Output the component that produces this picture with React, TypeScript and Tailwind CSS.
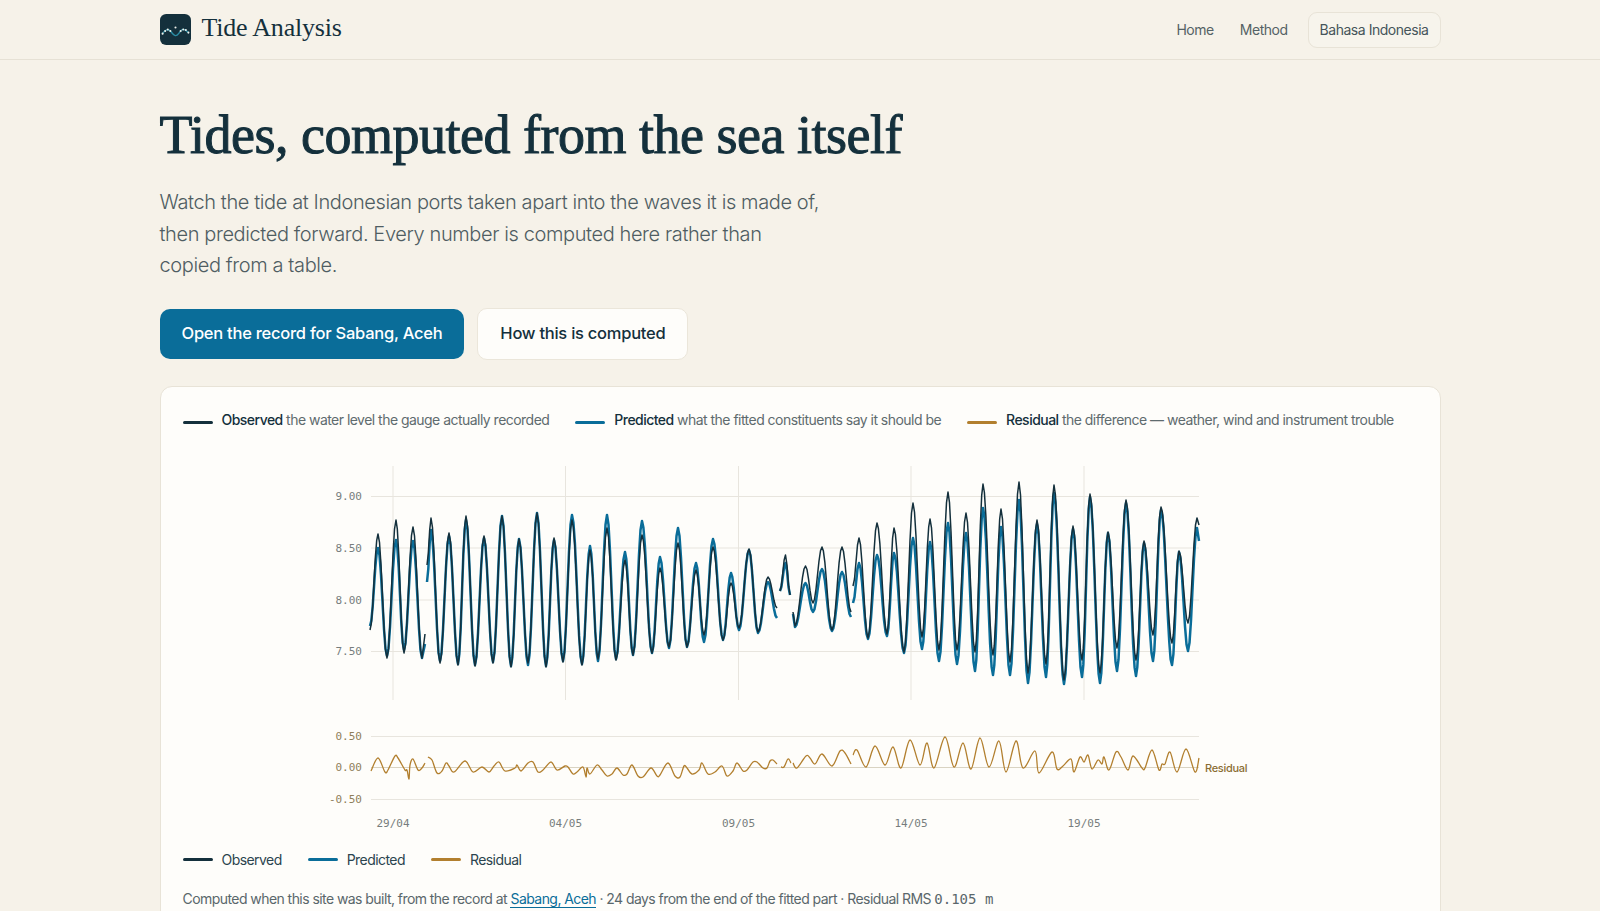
const INK = "#14303c";
const SEA = "#0a6d99";
const OCHRE = "#b27f2e";

// [x, observed y, predicted y] at each turning point, in page pixels. A new array is a gap in the record.
const tide: number[][][] = [
  [[370,630,626],[378,534,548],[387,658,656],[396,520,540],[404,653,650],[413,527,541],[422,658,658],[425,634,644]],
  [[427,565,582],[431,518,530],[440,663,661],[449,533,536],[458,665,664],[466,516,520],[475,666,665],[484,536,538],[493,663,662],[502,516,516],[511,667,666],[519,539,539],[528,663,665],[537,513,513],[546,667,666],[554,538,540],[563,662,661],[572,520,515],[582,665,664],[590,550,546],[598,659,661],[607,528,515],[616,660,659],[625,560,552],[633,655,655],[642,535,521],[652,653,653],[660,568,557],[669,647,648],[678,543,528],[687,647,647],[696,570,563],[704,635,642],[713,547,539],[723,640,640],[731,583,573],[739,628,630],[749,549,550],[758,632,633],[768,577,582],[777,608,618]],
  [[780,591,591],[785.5,555,563],[790,595,595]],
  [[793,612,614],[795,626,627],[805.5,566,583],[813,603,612],[822,547,569],[832,630,631],[842,547,572],[851,612,617]],
  [[853,586,603],[859,538,563],[868,638,639],[877,523,555],[887,634,636],[894,528,553],[904,652,653],[913,503,538],[922,637,649],[930,519,542],[939,650,661],[948,492,523],[957,650,664],[966,513,533],[975,652,671],[983,484,508],[993,655,675],[1001,509,527],[1010,662,675],[1019,482,500],[1028,673,683],[1037,520,524],[1046,664,677],[1054,485,493],[1064,680,684],[1073,526,529],[1082,660,677],[1090,494,497],[1100,673,683],[1108,532,533],[1117,648,671],[1126,500,503],[1136,660,676],[1144,541,543],[1153,635,661],[1161,507,510],[1172,643,665],[1179,551,552],[1188,623,651],[1197,518,528],[1199,525,541]],
];

// residual trace, read off as x / y pairs
const residual: number[][][] = [
  [[371,771],[378,758],[385,772],[388,770],[395,756],[398,758],[405,770],[407,770],[409,779],[410,765],[413,759],[418,770],[422,768],[425,763]],
  [[428,757],[432,760],[437,773],[442,771],[446,763],[449,766],[454,772],[465,761],[473,772],[482,767],[489,772],[494,766],[499,762],[505,771],[515,768],[517,765],[521,771],[528,763],[533,762],[538,772],[543,770],[551,762],[557,770],[565,766],[568,767],[573,774],[577,772],[583,767],[586,777],[587,768],[590,774],[597,765],[602,770],[607,776],[612,774],[617,768],[623,775],[627,774],[632,765],[638,776],[643,777],[651,768],[657,776],[660,775],[668,763],[675,776],[680,777],[684,766],[687,768],[692,774],[699,770],[702,763],[708,774],[715,772],[722,766],[727,776],[733,771],[737,763],[743,771],[747,770],[753,762],[757,762],[763,768],[767,768],[770,761],[773,760],[777,764]],
  [[781,767],[784,767],[788,759],[791,763]],
  [[793,763],[797,768],[806,756],[810,758],[815,764],[822,754],[832,766],[840,751],[845,753],[851,764]],
  [[853,755],[857,750],[866,767],[875,746],[885,765],[893,747],[901,768],[910,740],[920,765],[927,743],[934,768],[945,737],[954,767],[963,743],[971,769],[980,738],[989,767],[999,741],[1006,772],[1016,741],[1023,768],[1035,751],[1039,773],[1052,752],[1057,769],[1063,766],[1071,759],[1074,772],[1080,757],[1084,762],[1088,755],[1092,769],[1098,760],[1102,764],[1104,757],[1109,770],[1116,752],[1121,757],[1128,770],[1133,756],[1142,768],[1145,768],[1152,750],[1159,770],[1162,764],[1165,764],[1170,752],[1177,772],[1186,749],[1195,772],[1199,758]],
];

// cosine ease between turning points, about one sample per 1.44px like the hourly record
function tidePath(seg: number[][], col: number) {
  let d = `M${seg[0][0]} ${seg[0][col]}`;
  for (let i = 1; i < seg.length; i++) {
    const a = seg[i - 1];
    const b = seg[i];
    const n = Math.max(2, Math.round((b[0] - a[0]) / 1.44));
    for (let k = 1; k <= n; k++) {
      const t = k / n;
      const e = (1 - Math.cos(Math.PI * t)) / 2;
      d += `L${(a[0] + (b[0] - a[0]) * t).toFixed(1)} ${(a[col] + (b[col] - a[col]) * e).toFixed(1)}`;
    }
  }
  return d;
}

function smooth(seg: number[][]) {
  let d = `M${seg[0][0]} ${seg[0][1]}`;
  for (let i = 0; i < seg.length - 1; i++) {
    const p0 = seg[Math.max(0, i - 1)];
    const p1 = seg[i];
    const p2 = seg[i + 1];
    const p3 = seg[Math.min(seg.length - 1, i + 2)];
    d += `C${(p1[0] + (p2[0] - p0[0]) / 6).toFixed(1)} ${(p1[1] + (p2[1] - p0[1]) / 6).toFixed(1)} ${(p2[0] - (p3[0] - p1[0]) / 6).toFixed(1)} ${(p2[1] - (p3[1] - p1[1]) / 6).toFixed(1)} ${p2[0]} ${p2[1]}`;
  }
  return d;
}

const mono = '"DejaVu Sans Mono", "Liberation Mono", monospace';

function Chart() {
  const xs = [393, 565.5, 738.5, 911, 1084];
  const dates = ["29/04", "04/05", "09/05", "14/05", "19/05"];
  const ticks: [number, string][] = [[496.5, "9.00"], [548, "8.50"], [600, "8.00"], [651.5, "7.50"]];
  const resTicks: [number, string][] = [[736.5, "0.50"], [767.5, "0.00"], [799.5, "-0.50"]];
  return (
    <svg viewBox="183 450 1235 390" className="block w-[1235px] h-[390px]">
      {xs.map((x) => (
        <line key={x} x1={x} x2={x} y1={466} y2={700} stroke="#e8e5de" />
      ))}
      {ticks.map(([y, label]) => (
        <g key={label}>
          <line x1={371} x2={1199} y1={y} y2={y} stroke="#e8e5de" />
          <text x={362} y={y + 3.5} textAnchor="end" fontSize={11} fontFamily={mono} fill="#777d7d">{label}</text>
        </g>
      ))}
      {tide.map((seg, i) => (
        <path key={i} d={tidePath(seg, 2)} fill="none" stroke={SEA} strokeWidth={2.5} strokeLinejoin="round" />
      ))}
      {tide.map((seg, i) => (
        <path key={i} d={tidePath(seg, 1)} fill="none" stroke={INK} strokeWidth={1.5} strokeLinejoin="round" />
      ))}

      {resTicks.map(([y, label], i) => (
        <g key={label}>
          <line x1={371} x2={1199} y1={y} y2={y} stroke={i === 1 ? "#d9d3c2" : "#e8e5de"} />
          <text x={362} y={y + 3.5} textAnchor="end" fontSize={11} fontFamily={mono} fill="#8f7f5a">{label}</text>
        </g>
      ))}
      {residual.map((seg, i) => (
        <path key={i} d={smooth(seg)} fill="none" stroke={OCHRE} strokeWidth={1.3} strokeLinejoin="round" />
      ))}
      <text x={1205} y={771.5} fontSize={11} fontWeight={500} letterSpacing={-0.3} fontFamily="Inter, sans-serif" fill="#8a6d32">Residual</text>

      {xs.map((x, i) => (
        <text key={x} x={x} y={827} textAnchor="middle" fontSize={11} fontFamily={mono} fill="#777d7d">{dates[i]}</text>
      ))}
    </svg>
  );
}

const Swatch = ({ color, low }: { color: string; low?: boolean }) => (
  <span className={low ? "inline-block w-[30px] h-[3px] rounded-full mt-[5px]" : "inline-block w-[30px] h-[3px] rounded-full"} style={{ background: color }} />
);

export default function App() {
  return (
    <div className="h-[911px] overflow-hidden bg-[#f6f2e9] text-[#14303c] font-['Inter',sans-serif]">
      {/* Header */}
      <header className="h-[60px] border-b border-[#e6e1d5]">
        <div className="w-[1281px] mx-auto h-full flex items-center justify-between">
          <div className="flex items-center gap-[11px]">
            <svg viewBox="0 0 30 30" className="w-[31px] h-[31px]">
              <rect width="30" height="30" rx="6" fill={INK} />
              <path d="M2.5 19C5 15 8 14 10.5 17S15 23 18 19S22 14 24.5 15.5S27 18 27.5 18" fill="none" stroke="#2a8ba3" strokeWidth="1.4" strokeLinecap="round" />
              <g fill="#eef0ea">
                <circle cx="2.5" cy="19" r="1" />
                <circle cx="5" cy="16.5" r="1" />
                <circle cx="7.5" cy="15" r="1" />
                <circle cx="10" cy="16.5" r="1" />
                <circle cx="15" cy="13" r="1" />
                <circle cx="20" cy="16.5" r="1" />
                <circle cx="22.5" cy="15" r="1" />
                <circle cx="25" cy="15.5" r="1" />
                <circle cx="27.5" cy="18" r="1" />
              </g>
            </svg>
            <span className="font-['Liberation_Serif',serif] text-[26px] leading-none -mt-[4px] tracking-[-0.2px]">Tide Analysis</span>
          </div>
          <nav className="flex items-center text-[14px] tracking-[-0.47px] text-[#556265]">
            <a className="mr-[26px]">Home</a>
            <a className="mr-[20px]">Method</a>
            <a className="h-[36px] px-[11px] flex items-center rounded-[9px] border border-[#e8e3d7] bg-[#f7f4ec] text-[#46555a]">Bahasa Indonesia</a>
          </nav>
        </div>
      </header>

      <main className="w-[1281px] mx-auto">
        {/* Hero */}
        <h1 className="mt-[42px] font-['Liberation_Serif',serif] font-normal text-[54px] leading-[66px] tracking-[-0.5px] [-webkit-text-stroke:1px_#14303c]">
          Tides, computed from the sea itself
        </h1>
        <p className="mt-[19px] w-[700px] text-[20px] leading-[31.5px] tracking-[-0.39px] font-[350] text-[#4f5d62]">
          Watch the tide at Indonesian ports taken apart into the waves it is made of,<br />
          then predicted forward. Every number is computed here rather than<br />
          copied from a table.
        </p>
        <div className="mt-[26px] flex items-center gap-[13px]">
          <a className="h-[50px] px-[22px] flex items-center rounded-[10px] bg-[#0a6d99] text-white text-[16.5px] tracking-[-0.25px] font-[450]">Open the record for Sabang, Aceh</a>
          <a className="h-[52px] px-[22px] flex items-center rounded-[10px] border border-[#ebe6da] bg-[#fefdfa] text-[16.5px] tracking-[-0.25px] font-[450]">How this is computed</a>
        </div>

        {/* Chart card */}
        <section className="mt-[26px] rounded-[12px] border border-[#e8e3d7] bg-[#fefdfa] px-[22px] pt-[23px] pb-[24px]">
          <div className="flex items-center gap-[26px] whitespace-nowrap text-[14px] leading-[20px] tracking-[-0.53px] text-[#5f6b6e]">
            <span className="flex items-center gap-[9px]">
              <Swatch color={INK} low />
              <span><b className="font-medium text-[#14303c]">Observed</b> the water level the gauge actually recorded</span>
            </span>
            <span className="flex items-center gap-[9px]">
              <Swatch color={SEA} low />
              <span><b className="font-medium text-[#14303c]">Predicted</b> what the fitted constituents say it should be</span>
            </span>
            <span className="flex items-center gap-[9px]">
              <Swatch color={OCHRE} low />
              <span><b className="font-medium text-[#14303c]">Residual</b> the difference — weather, wind and instrument trouble</span>
            </span>
          </div>

          <div className="mt-[20px]">
            <Chart />
          </div>

          <div className="mt-[10px] flex items-center gap-[26px] text-[14px] leading-[20px] tracking-[-0.56px] text-[#2b444e]">
            <span className="flex items-center gap-[9px]"><Swatch color={INK} />Observed</span>
            <span className="flex items-center gap-[9px]"><Swatch color={SEA} />Predicted</span>
            <span className="flex items-center gap-[9px]"><Swatch color={OCHRE} />Residual</span>
          </div>

          <p className="mt-[19px] whitespace-nowrap text-[14px] leading-[20px] tracking-[-0.56px] text-[#5a676b]">
            Computed when this site was built, from the record at{" "}
            <a className="text-[#0a6d99] border-b border-[#0a6d99]">Sabang, Aceh</a>
            {" "}· 24 days from the end of the fitted part · Residual RMS{" "}
            <span className="font-['DejaVu_Sans_Mono',monospace] text-[14px] tracking-normal">0.105 m</span>
          </p>
        </section>
      </main>
    </div>
  );
}
